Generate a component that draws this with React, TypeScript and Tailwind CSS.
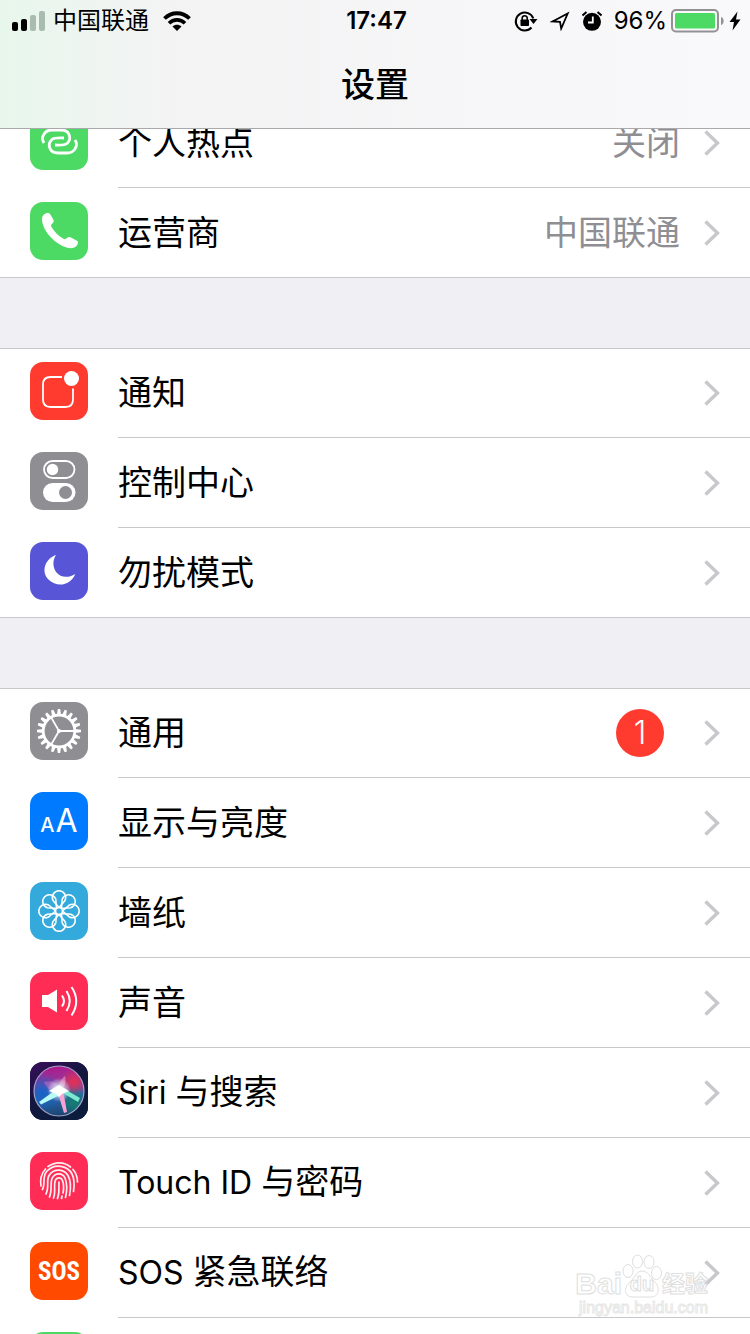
import React from 'react';

interface RowProps {
  icon: React.ReactNode;
  iconBg: string;
  latin?: string;
  label?: string;
  value?: string;
  badge?: number;
}

const HotspotIcon = () => (
  <svg viewBox="0 0 58 58" className="w-full h-full" fill="none" stroke="#fff" strokeWidth="2.8">
    <path d="M14 31C10.500 26 14 18 22 18H31C40 18 42 27 37 31.500C34.500 33.600 30 33 25 33" />
    <path transform="rotate(180 29.5 29.5)" d="M14 31C10.500 26 14 18 22 18H31C40 18 42 27 37 31.500C34.500 33.600 30 33 25 33" />
  </svg>
);

const PhoneIcon = () => (
  <svg viewBox="0 0 58 58" className="w-full h-full" fill="#fff">
    <path d="M12 16.500C12.500 12.500 15.500 11 18 11C20 11 21 13.500 23.300 17.500C24.300 19.300 23.500 20.500 22.300 21.500C21 22.600 20.700 23.600 21.500 25C24.500 30 28.500 34 33.500 36.800C34.800 37.500 36 37 37 36C38 34.800 39.500 34.600 41 35.500L47 38.800C48.300 39.600 48.300 41 47.500 42.500C46 45.500 42 47 37.500 45.800C24.500 42.500 11.500 27.500 12 16.500Z" />
  </svg>
);

const NotificationIcon = () => (
  <svg viewBox="0 0 58 58" className="w-full h-full" fill="none">
    <path d="M32 15H20.500Q13 15 13 22.500V37.500Q13 45 20.500 45H35.500Q43 45 43 37.500V26.500" stroke="#fff" strokeWidth="1.8" />
    <circle cx="41.500" cy="16.500" r="7.500" fill="#fff" />
  </svg>
);

const ControlIcon = () => (
  <svg viewBox="0 0 58 58" className="w-full h-full" fill="none">
    <rect x="14" y="9" width="30.500" height="17" rx="8.500" stroke="#fff" strokeWidth="1.8" />
    <circle cx="22.500" cy="17.500" r="5.700" fill="#fff" />
    <rect x="13" y="31" width="32.500" height="19" rx="9.500" fill="#fff" />
    <circle cx="35.500" cy="40.500" r="6.500" fill="#8e8e93" />
  </svg>
);

const MoonIcon = () => (
  <svg viewBox="0 0 58 58" className="w-full h-full" fill="#fff">
    <path d="M26 13C14.500 17 11 30 18.500 37.500C27 46 41 43.500 45.200 32C38 36.500 30.500 35.500 26.500 30.500C22.500 25.500 22.500 18 26 13Z" />
  </svg>
);

const TEETH = Array.from({ length: 20 }, (_, i) => i * 18);

const GearIcon = () => (
  <svg viewBox="0 0 58 58" className="w-full h-full" fill="none">
    <circle cx="29" cy="29" r="15.800" stroke="#fff" strokeWidth="2.800" />
    {TEETH.map((angle) => (
      <path key={angle} d="M26.900 13L27.800 7H30.200L31.100 13Z" fill="#fff" transform={`rotate(${angle} 29 29)`} />
    ))}
    {[90, 210, 330].map((angle) => (
      <path key={angle} d="M29 29V13" stroke="#fff" strokeWidth="1.800" transform={`rotate(${angle} 29 29)`} />
    ))}
    <circle cx="29" cy="29" r="2" fill="#fff" />
  </svg>
);

const DisplayIcon = () => (
  <span className="flex items-baseline justify-center gap-px w-full text-white leading-[58px]">
    <span className="text-[20px] font-medium">A</span>
    <span className="text-[32px]">A</span>
  </span>
);

const PETALS = [0, 45, 90, 135, 180, 225, 270, 315];

const WallpaperIcon = () => (
  <svg viewBox="0 0 58 58" className="w-full h-full" fill="none" stroke="#fff" strokeWidth="1.500">
    {PETALS.map((angle) => (
      <path key={angle} d="M29 25.500L23 18.500A6.700 6.700 0 1 1 35 18.500Z" transform={`rotate(${angle} 29 29)`} />
    ))}
    <circle cx="29" cy="29" r="3.500" />
  </svg>
);

const SoundIcon = () => (
  <svg viewBox="0 0 58 58" className="w-full h-full" fill="none" stroke="#fff" strokeWidth="2">
    <path d="M12 23H18L27 17.500V40.500L18 35H12Z" fill="#fff" stroke="none" />
    <path d="M32 23.500Q36 29 32 34.500" />
    <path d="M36.500 19Q43 29 36.500 39" />
    <path d="M41.500 15Q51 29 41.500 43.500" />
  </svg>
);

const SiriIcon = () => (
  <svg viewBox="0 0 58 58" className="w-full h-full" fill="none">
    <defs>
      <linearGradient id="siriBg" x1="0" y1="0" x2="0.6" y2="1">
        <stop offset="0" stopColor="#3b0d5c" />
        <stop offset="0.5" stopColor="#14163f" />
        <stop offset="1" stopColor="#0b1c3c" />
      </linearGradient>
      <linearGradient id="siriBall" x1="0.4" y1="0" x2="0.5" y2="1">
        <stop offset="0" stopColor="#b0188c" />
        <stop offset="0.4" stopColor="#8c3f9e" />
        <stop offset="0.6" stopColor="#2a68b0" />
        <stop offset="1" stopColor="#1a4470" />
      </linearGradient>
      <radialGradient id="siriRed" cx="44" cy="20" r="14" gradientUnits="userSpaceOnUse">
        <stop offset="0" stopColor="#e8304e" />
        <stop offset="1" stopColor="#e8304e" stopOpacity="0" />
      </radialGradient>
      <radialGradient id="siriBlue" cx="12" cy="30" r="20" gradientUnits="userSpaceOnUse">
        <stop offset="0" stopColor="#1464c8" />
        <stop offset="1" stopColor="#1464c8" stopOpacity="0" />
      </radialGradient>
      <radialGradient id="siriTeal" cx="44" cy="41" r="15" gradientUnits="userSpaceOnUse">
        <stop offset="0" stopColor="#12806c" />
        <stop offset="1" stopColor="#12806c" stopOpacity="0" />
      </radialGradient>
      <radialGradient id="siriGlow" cx="29" cy="28" r="12" gradientUnits="userSpaceOnUse">
        <stop offset="0" stopColor="#fff" />
        <stop offset="0.4" stopColor="#e4f4ff" stopOpacity="0.7" />
        <stop offset="1" stopColor="#fff" stopOpacity="0" />
      </radialGradient>
    </defs>
    <rect width="58" height="58" fill="url(#siriBg)" />
    <circle cx="29" cy="29" r="25" fill="url(#siriBall)" />
    <circle cx="29" cy="29" r="25" fill="url(#siriRed)" />
    <circle cx="29" cy="29" r="25" fill="url(#siriBlue)" />
    <circle cx="29" cy="29" r="25" fill="url(#siriTeal)" />
    <path d="M14 20C24 17 30 23 31 30C22 31 17 27 14 20Z" fill="#f07ad0" fillOpacity="0.4" />
    <path d="M35 14C30 18 28 23 29 29C34 27 37 20 35 14Z" fill="#ffb0d8" fillOpacity="0.500" />
    <circle cx="29" cy="28" r="12" fill="url(#siriGlow)" />
    <path d="M31 24L9 40L11 42.500L34 31Z" fill="#b8fbf2" />
    <path d="M26 27L48 40L50 36L31 25Z" fill="#7ce8d0" />
    <path d="M27 28L34 51L37 50L33 28Z" fill="#f6a2d2" />
    <path d="M19 29L29 23L39 29L32 32L29 35L26 32Z" fill="#fff" />
    <circle cx="29" cy="29" r="25" stroke="#b9b3d8" strokeWidth="1.200" strokeOpacity="0.850" />
  </svg>
);

const TouchIcon = () => (
  <svg viewBox="0 0 58 58" className="w-full h-full" fill="none" stroke="#fff" strokeOpacity="0.92" strokeWidth="1.700" strokeLinecap="round">
    <path d="M18 14.500C25 9.500 34 9.500 40.500 15" />
    <path d="M15.500 17C11 22 10 28 11 34" />
    <path d="M43 17.500C46 21 47.500 25 47.500 30" />
    <path d="M12.500 37.500C16 31 11.500 25 17 19C25 10.500 38 14 42 22C44.500 27 44.500 33 43.500 39.500" />
    <path d="M16 42C19.500 35 16 29 19 23.500C24 15.500 34.500 17 38 23.500C41 29 41 36 39.500 43.500" />
    <path d="M19.500 45C22.500 38 20 31 22 26.500C25 20.500 32.500 20.500 35 26C37.500 32 37 39 35.500 45.500" />
    <path d="M23.500 46C26 40 23.500 33 25.300 28.500C26.800 25 31 25 32.500 28.500C34 32.500 33.800 37 33 41" />
    <path d="M27.500 46.500C30 40 28.500 35 29 30" />
    <path d="M32 44L31.500 46.500" />
  </svg>
);

const SosIcon = () => (
  <span className="w-full text-center text-white text-[25px] leading-[60px] font-bold font-['Liberation_Sans_Narrow','Roboto_Condensed','Liberation_Sans',sans-serif]">
    SOS
  </span>
);

const Chevron = () => (
  <svg viewBox="0 0 16 28" className="w-4 h-7 shrink-0" fill="none">
    <path d="M1.500 2.500L13.500 14L1.500 25.500" stroke="#c7c7cc" strokeWidth="3.400" />
  </svg>
);

const Row: React.FC<RowProps> = ({ icon, iconBg, latin, label, value, badge }) => (
  <li className="group h-[90px] first:h-[89px] border-[#c8c7cc] last:border-b">
    <a href="#" className="flex h-full items-end pl-[30px]">
      <span className="h-full flex flex-col justify-end pb-[18px] group-last:pb-[17px]">
        <span className={`flex w-[58px] h-[58px] rounded-[13px] overflow-hidden ${iconBg}`}>{icon}</span>
      </span>
      <span className="flex flex-1 items-center h-full gap-6 ml-[30px] pr-[30px] border-b border-[#c8c7cc] group-last:border-b-0">
        <span className="flex-1">
          {latin && <span className="text-[32px]">{latin} </span>}
          {label}
        </span>
        {value && <span className="text-[#8e8e93]">{value}</span>}
        {badge && (
          <span className="w-12 h-12 mr-4 rounded-full bg-[#ff3b30] text-white text-[32px] font-light text-center leading-[48px]">
            {badge}
          </span>
        )}
        <Chevron />
      </span>
    </a>
  </li>
);

const Group: React.FC<{ children: React.ReactNode }> = ({ children }) => (
  <ul className="bg-white border-t border-[#c8c7cc]">{children}</ul>
);

const StatusBar = () => (
  <div className="grid grid-cols-[1fr_auto_1fr] items-center h-[42px] pl-3 pr-[9px] text-[24px] leading-[42px]">
    <div className="flex items-center gap-2">
      <svg viewBox="0 0 33 20" className="w-[33px] h-5">
        <rect x="0" y="11" width="6" height="9" rx="2" />
        <rect x="9" y="8" width="6" height="12" rx="2" />
        <rect x="18" y="4" width="6" height="16" rx="2" fill="#a9bcae" />
        <rect x="27" y="0" width="6" height="20" rx="2" fill="#a9bcae" />
      </svg>
      <span>中国联通</span>
      <svg viewBox="0 0 28 20" className="w-7 h-5 ml-1.5" fill="none" stroke="#000">
        <path d="M1.500 7.500C8.500 0.500 19.500 0.500 26.500 7.500" strokeWidth="3.800" />
        <path d="M6 12.200C10.500 7.800 17.500 7.800 22 12.200" strokeWidth="3.600" />
        <path d="M9.500 15.500C12 13.200 16 13.200 18.500 15.500L14 20Z" fill="#000" stroke="none" />
      </svg>
    </div>
    <span className="font-semibold">17:47</span>
    <div className="flex items-center justify-end">
      <svg viewBox="0 0 24 22" className="w-6 h-[22px]" fill="none" stroke="#000" strokeWidth="2">
        <path d="M17.500 17.500A9 9 0 1 1 19.300 8.500" />
        <path d="M15.500 9H23.500L19.500 14Z" fill="#000" stroke="none" />
        <rect x="6.500" y="9.500" width="8.500" height="6.500" rx="0.800" fill="#000" stroke="none" />
        <path d="M8.200 10V8.200A2.500 2.500 0 0 1 13.200 8.200V10" strokeWidth="1.600" />
      </svg>
      <svg viewBox="0 0 20 20" className="w-5 h-5 ml-3" fill="none" stroke="#000" strokeWidth="1.800">
        <path d="M2.500 10.500L17.700 2.500L11.200 17.500L10 10.800Z" />
      </svg>
      <svg viewBox="0 0 20 20" className="w-5 h-5 ml-3">
        <circle cx="10" cy="10.800" r="9" />
        <path d="M0.500 4.500L4.500 1M19.500 4.500L15.500 1" stroke="#000" strokeWidth="2" />
        <path d="M10.800 5.500V11.500H6" stroke="#fff" strokeWidth="1.800" fill="none" />
      </svg>
      <span className="ml-3">96%</span>
      <svg viewBox="0 0 54 24" className="w-[54px] h-6 ml-1" fill="none">
        <rect x="1" y="1" width="46" height="21.500" rx="4" stroke="#929295" strokeWidth="2" />
        <rect x="4" y="4" width="40" height="15.500" rx="1.500" fill="#4cd964" />
        <path d="M50 8C53.500 9 53.500 15 50 16Z" fill="#929295" />
      </svg>
      <svg viewBox="0 0 12 20" className="w-3 h-5 ml-1">
        <path d="M8.500 0.500L0.500 11H5L3.500 19.500L11.500 8.500H7Z" />
      </svg>
    </div>
  </div>
);

const Watermark = () => (
  <div className="absolute right-[42px] bottom-4 flex flex-col items-end text-white opacity-80 pointer-events-none font-['Liberation_Sans','Noto_Sans_CJK_SC',sans-serif]">
    <div className="flex items-end font-bold leading-7 [-webkit-text-stroke:1px_#d8d8d8]">
      <span className="text-[30px]">Bai</span>
      <span className="relative w-10 h-11">
        <svg viewBox="0 0 40 44" className="w-full h-full" fill="#fff" stroke="#d8d8d8">
          <ellipse cx="6" cy="17" rx="5" ry="6.500" />
          <ellipse cx="15.500" cy="7.500" rx="5" ry="6.500" />
          <ellipse cx="27" cy="8" rx="5" ry="6.500" />
          <ellipse cx="34.500" cy="19" rx="5" ry="6.500" />
          <path d="M20 17C26 17 28 23 32 27C39 34 37 43 29 43C24 43 16 43 11 43C2 43 1 34 8 28C13 24 14 17 20 17Z" />
        </svg>
        <span className="absolute inset-x-0 bottom-0 text-center text-[20px]">du</span>
      </span>
      <span className="text-[23px]">经验</span>
    </div>
    <span className="text-[16px] leading-5 [-webkit-text-stroke:1px_#e2e2e2]">jingyan.baidu.com</span>
  </div>
);

const SettingsPage: React.FC = () => {
  return (
    <div className="relative flex flex-col h-screen overflow-hidden bg-[#efeff4] text-black font-['Inter','Noto_Sans_CJK_SC',sans-serif]">
      <header className="relative z-10 shrink-0 border-b border-[#a9a9ac] bg-linear-to-r from-[#e8f7ec] via-[#f3f3f4] via-22% to-[#f9f9fb]">
        <StatusBar />
        <h1 className="h-[86px] text-center text-[34px] leading-[86px] font-medium">设置</h1>
      </header>

      {/* List is scrolled partly under the header */}
      <main className="flex-1 min-h-0 -mt-[31px] flex flex-col gap-[70px] overflow-y-auto [scrollbar-width:none] text-[34px] leading-[48px]">
        <Group>
          <Row icon={<HotspotIcon />} iconBg="bg-[#4cd964]" label="个人热点" value="关闭" />
          <Row icon={<PhoneIcon />} iconBg="bg-[#4cd964]" label="运营商" value="中国联通" />
        </Group>
        <Group>
          <Row icon={<NotificationIcon />} iconBg="bg-[#ff3b30]" label="通知" />
          <Row icon={<ControlIcon />} iconBg="bg-[#8e8e93]" label="控制中心" />
          <Row icon={<MoonIcon />} iconBg="bg-[#5856d6]" label="勿扰模式" />
        </Group>
        <Group>
          <Row icon={<GearIcon />} iconBg="bg-[#8e8e93]" label="通用" badge={1} />
          <Row icon={<DisplayIcon />} iconBg="bg-[#007aff]" label="显示与亮度" />
          <Row icon={<WallpaperIcon />} iconBg="bg-[#34aadc]" label="墙纸" />
          <Row icon={<SoundIcon />} iconBg="bg-[#ff2d55]" label="声音" />
          <Row icon={<SiriIcon />} iconBg="bg-[#14163f]" latin="Siri" label="与搜索" />
          <Row icon={<TouchIcon />} iconBg="bg-[#ff2d55]" latin="Touch ID" label="与密码" />
          <Row icon={<SosIcon />} iconBg="bg-[#ff4a00]" latin="SOS" label="紧急联络" />
          <Row icon={null} iconBg="bg-[#4cd964]" />
        </Group>
      </main>

      <Watermark />
    </div>
  );
};

export default SettingsPage;
